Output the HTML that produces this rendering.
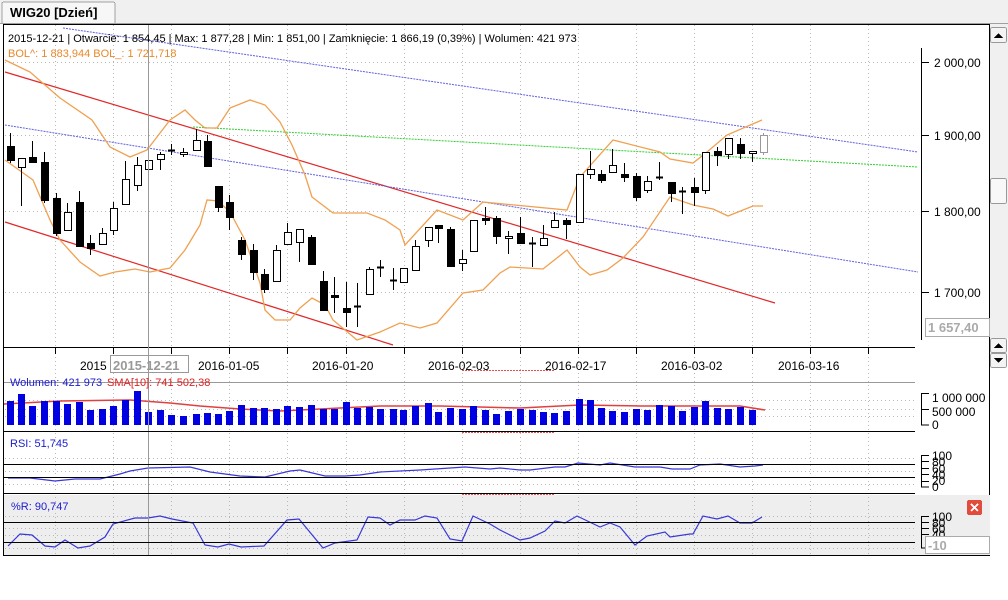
<!DOCTYPE html>
<html><head><meta charset="utf-8">
<style>
html,body{margin:0;padding:0;background:#fff;}
body{width:1008px;height:595px;overflow:hidden;position:relative;font-family:"Liberation Sans",sans-serif;}
svg text{font-family:"Liberation Sans",sans-serif;}
</style></head><body>
<svg id="s" width="1008" height="595" viewBox="0 0 1008 595" xmlns="http://www.w3.org/2000/svg" shape-rendering="crispEdges">
<rect x="0" y="0" width="1008" height="24" fill="#f0f0f0"/>
<path d="M2 23 V4 Q2 2 4 2 H113 Q115 2 115 4 V23" fill="#f7f7f7" stroke="#a0a0a0"/>
<text x="10" y="17" font-size="13" font-weight="bold" fill="#000">WIG20 [Dzień]</text>
<line x1="0" y1="23.5" x2="1008" y2="23.5" stroke="#a0a0a0"/>
<rect x="3.5" y="24.5" width="986" height="531" fill="#fff" stroke="#000"/>
<rect x="4" y="495" width="986" height="60" fill="#eeeeee"/>
<rect x="990" y="24" width="18" height="314" fill="#f0f0f0"/>
<rect x="990.5" y="27.5" width="16" height="15" fill="#f4f4f4" stroke="#999" rx="2"/>
<path d="M994 38 L998.5 33 L1003 38Z" fill="#000"/>
<rect x="990.5" y="178.5" width="16" height="25" fill="#f8f8f8" stroke="#999" rx="2"/>
<rect x="990.5" y="338.5" width="16" height="14" fill="#f4f4f4" stroke="#999" rx="2"/>
<path d="M994 348 L998.5 343 L1003 348Z" fill="#000"/>
<rect x="990.5" y="353.5" width="16" height="14" fill="#f4f4f4" stroke="#999" rx="2"/>
<path d="M994 358 L998.5 363 L1003 358Z" fill="#000"/>
<g id="grid" stroke="#b8b8b8" stroke-dasharray="1,3"></g>
<g id="lines" fill="none" shape-rendering="auto"></g>
<g id="candles"></g>
<line x1="921.5" y1="48" x2="921.5" y2="340" stroke="#000"/>
<g stroke="#000"><line x1="921" y1="62.5" x2="929" y2="62.5"/><line x1="921" y1="135.5" x2="929" y2="135.5"/><line x1="921" y1="211.5" x2="929" y2="211.5"/><line x1="921" y1="292.5" x2="929" y2="292.5"/></g>
<g font-size="12" fill="#000"><text x="934" y="67">2 000,00</text><text x="934" y="140">1 900,00</text><text x="934" y="216">1 800,00</text><text x="934" y="297">1 700,00</text></g>
<rect x="925.5" y="318.5" width="64" height="18" fill="#fff" stroke="#aaa"/>
<text x="928" y="332" font-size="13" font-weight="bold" fill="#aaa">1 657,40</text>
<line x1="4" y1="347.5" x2="915" y2="347.5" stroke="#000"/>
<g id="ticks" stroke="#000"></g>
<g font-size="12" fill="#000"><text x="80" y="370">2015</text><text x="198" y="370">2016-01-05</text><text x="312" y="370">2016-01-20</text><text x="428" y="370">2016-02-03</text><text x="545" y="370">2016-02-17</text><text x="661" y="370">2016-03-02</text><text x="778" y="370">2016-03-16</text></g>
<rect x="110.5" y="355.5" width="78" height="17" fill="#fff" stroke="#999"/>
<text x="113" y="370" font-size="13" font-weight="bold" fill="#999">2015-12-21</text>
<line x1="4" y1="382.5" x2="915" y2="382.5" stroke="#999"/>
<line x1="148.5" y1="25" x2="148.5" y2="555" stroke="#999"/>
<g stroke="#e05050" stroke-dasharray="2,1"><line x1="462" y1="370.5" x2="555" y2="370.5"/><line x1="462" y1="432.5" x2="555" y2="432.5"/><line x1="462" y1="494.5" x2="555" y2="494.5"/></g>
<line x1="4" y1="431.5" x2="915" y2="431.5" stroke="#000"/>
<line x1="4" y1="464.5" x2="915" y2="464.5" stroke="#000"/>
<line x1="4" y1="477.5" x2="915" y2="477.5" stroke="#000"/>
<line x1="4" y1="493.5" x2="915" y2="493.5" stroke="#000"/>
<line x1="4" y1="522.5" x2="915" y2="522.5" stroke="#000"/>
<line x1="4" y1="542.5" x2="915" y2="542.5" stroke="#000"/>
<g stroke="#000" fill="none"><path d="M921.5 393V425H929M921 393.5H929M921 409.5H929"/>
<path d="M921.5 455V487H929M921 455.5H929M921 461.5H929M921 468.5H929M921 474.5H929M921 481.5H929"/>
<path d="M921.5 516V548H929M921 516.5H929M921 522.5H929M921 528.5H929M921 534.5H929"/></g>
<g font-size="12" fill="#000"><text x="932" y="402">1 000 000</text><text x="932" y="416">500 000</text><text x="932" y="429">0</text>
<text x="932" y="460">100</text><text x="932" y="466">80</text><text x="932" y="473">60</text><text x="932" y="479">40</text><text x="932" y="485">20</text><text x="932" y="491">0</text>
<text x="932" y="521">100</text><text x="932" y="527">80</text><text x="932" y="533">60</text><text x="932" y="539">40</text></g>
<rect x="925.5" y="536.5" width="64" height="17" fill="#fff" stroke="#aaa"/>
<text x="928" y="550" font-size="13" font-weight="bold" fill="#aaa">-10</text>
<rect x="967" y="500" width="15" height="15" fill="#e24c3c" rx="2"/>
<path d="M971 504L978 511M978 504L971 511" stroke="#fff" stroke-width="2"/>
<text x="8" y="42" font-size="11" fill="#000">2015-12-21 | Otwarcie: 1 854,45 | Max: 1 877,28 | Min: 1 851,00 | Zamknięcie: 1 866,19 (0,39%)  | Wolumen: 421 973</text>
<text x="8" y="57" font-size="11" fill="#e8892a">BOL^: 1 883,944  BOL_: 1 721,718</text>
<text x="10" y="386" font-size="11" fill="#1a1ad0">Wolumen: 421 973</text>
<text x="107" y="386" font-size="11" fill="#e02020">SMA[10]: 741 502,38</text>
<text x="10" y="447" font-size="11" fill="#1a1ad0">RSI: 51,745</text>
<text x="11" y="510" font-size="11" fill="#1a1ad0">%R: 90,747</text>
</svg>
<script>
var NS="http://www.w3.org/2000/svg",S=document.getElementById('s');
function el(p,t,a){var e=document.createElementNS(NS,t);for(var k in a)e.setAttribute(k,a[k]);p.appendChild(e);return e;}
var G=document.getElementById('grid');
[62,135,211,292,400,409,416,458,471,484,516,528,535,548].forEach(function(y){el(G,'line',{x1:5,y1:y+.5,x2:915,y2:y+.5});});
for(var x=55;x<=870;x+=58.1){el(G,'line',{x1:Math.round(x)+.5,y1:25,x2:Math.round(x)+.5,y2:555});}
var T=document.getElementById('ticks');
for(var x=55;x<=870;x+=58.1){el(T,'line',{x1:Math.round(x)+.5,y1:347,x2:Math.round(x)+.5,y2:354});}
var L=document.getElementById('lines');
function pl(pts,st,w,da){var a={points:pts,stroke:st,'stroke-width':w||1,fill:'none'};if(da)a['stroke-dasharray']=da;el(L,'polyline',a);}
pl("5,72 775,303","#e02828",1.2);
pl("5,222 393,345","#e02828",1.2);
pl("63,28 918,152","#6060e0",1,"2,1");
pl("5,125 918,272","#6060e0",1,"2,1");
pl("193,127 918,167","#30d030",1,"2,1");
pl("5,60 30,72 60,98 92,120 110,147 130,157 147,150 170,120 185,110 195,120 205,128 217,128 230,108 250,100 265,105 280,122 292,145 305,175 312,197 333,213 367,213 385,220 400,230 405,245 437,210 463,220 483,202 567,210 580,177 613,140 660,152 670,159 693,163 707,152 727,135 762,120","#f0a050",1.3);
pl("5,160 33,180 50,220 60,240 80,262 100,276 115,272 135,269 150,272 170,268 185,250 200,225 207,200 218,201 230,212 245,240 260,283 265,310 275,320 290,320 300,308 312,298 325,305 333,320 357,340 380,332 400,323 420,328 437,323 463,293 483,290 500,273 510,267 543,269 567,250 580,267 590,275 607,270 623,258 643,237 670,197 693,205 713,209 728,216 753,206 763,206","#f0a050",1.3);
var C=document.getElementById('candles');
var d=[[10,146,160,133,163,'b'],[21,158,167,158,206,'w'],[32,157,162,141,163,'b'],[44,162,200,152,203,'b'],[56,198,233,193,236,'b'],[67,212,230,203,230,'w'],[79,202,246,191,246,'b'],[90,243,248,235,255,'b'],[102,233,244,228,244,'w'],[113,208,230,202,235,'w'],[125,179,204,161,204,'w'],[137,165,185,157,191,'w'],[148,160,169,160,169,'w'],[160,154,159,152,170,'w'],[171,150,150,144,155,'c'],[183,152,154,148,157,'w'],[196,140,150,129,150,'w'],[207,141,166,135,167,'b'],[218,186,207,186,212,'b'],[229,202,217,195,230,'b'],[241,240,254,237,260,'b'],[253,250,272,244,280,'b'],[264,274,289,269,293,'b'],[276,250,281,245,281,'w'],[287,232,244,223,244,'w'],[299,229,242,229,262,'w'],[311,237,264,235,264,'b'],[323,281,310,271,310,'b'],[334,295,297,277,313,'b'],[346,308,312,282,327,'b'],[357,306,306,283,327,'c'],[369,269,294,267,294,'w'],[380,267,267,260,277,'c'],[393,280,280,268,290,'c'],[403,268,282,268,282,'w'],[415,246,270,240,270,'w'],[428,227,240,227,247,'w'],[438,225,228,225,243,'b'],[450,229,266,227,267,'b'],[462,259,263,250,271,'w'],[473,220,251,220,251,'w'],[485,218,220,207,225,'b'],[496,218,236,216,244,'b'],[508,236,238,231,254,'w'],[520,233,243,217,243,'b'],[532,243,243,237,267,'c'],[543,238,245,225,246,'w'],[554,220,227,212,228,'w'],[566,220,224,218,239,'b'],[579,174,222,174,222,'w'],[590,169,174,151,179,'w'],[601,174,180,170,183,'b'],[612,165,172,149,172,'w'],[624,174,177,163,182,'b'],[636,176,197,173,201,'b'],[647,181,190,176,193,'w'],[659,177,177,162,180,'c'],[671,182,193,182,202,'b'],[682,191,191,187,214,'c'],[694,187,192,178,206,'b'],[705,152,190,152,194,'w'],[717,151,155,147,166,'b'],[728,138,154,138,159,'w'],[740,144,153,138,159,'b'],[752,151,153,151,162,'w'],[763,135,152,133,155,'g']];
d.forEach(function(c){var x=c[0],col=c[5]=='g'?'#999':'#000';
el(C,'line',{x1:x+.5,y1:c[3],x2:x+.5,y2:c[4],stroke:col,'stroke-width':1.3});
if(c[5]=='c'){el(C,'line',{x1:x-3,y1:c[1]+.5,x2:x+4,y2:c[1]+.5,stroke:col,'stroke-width':2});}
else el(C,'rect',{x:x-3+.5,y:c[1]+.5,width:7,height:Math.max(2,c[2]-c[1]),fill:c[5]=='b'?'#000':'#fff',stroke:col,'stroke-width':1.2});});
var v=[401,394,406,401,401,404,402,410,409,406,400,391,412,410,415,416,414,413,414,411,405,408,408,409,406,407,405,409,409,402,408,407,409,409,410,406,403,412,408,409,406,410,414,411,409,410,412,413,411,399,400,408,411,412,409,410,405,406,411,407,401,408,409,407,410];
v.forEach(function(t,i){var x=d[i][0];el(C,'rect',{x:x-3,y:t,width:7,height:425-t,fill:'#0000e0'});});
pl("4,404 60,401 130,400 170,403 200,406 240,409 280,411 320,409 380,406 440,406 520,408 580,405 640,406 700,406 740,406 765,410","#e04040",1.5);
pl("8,478 30,478 55,481 75,479 100,479 120,474 130,471 148,468 190,467 210,472 240,476 265,477 290,471 300,470 325,476 345,476 360,475 380,472 420,470 465,467 490,469 500,468 520,470 530,470 555,467 565,467 578,463 600,465 610,463 635,467 660,467 672,469 690,469 700,465 720,464 740,467 755,466 763,465","#3838d8",1.2);
pl("8,546 20,534 32,535 45,546 55,547 65,540 78,548 90,546 105,537 113,524 135,518 148,518 160,516 172,519 193,523 205,545 218,547 229,544 241,547 264,546 287,520 299,519 323,548 335,543 357,540 368,517 380,518 390,525 400,520 415,520 425,516 437,518 450,539 462,541 473,516 490,524 500,530 520,540 530,538 545,531 555,521 565,523 577,516 600,527 610,523 620,527 635,545 647,536 665,532 670,537 690,534 693,534 703,516 717,519 728,516 740,523 752,523 762,517","#3838d8",1.2);
</script>
</body></html>
